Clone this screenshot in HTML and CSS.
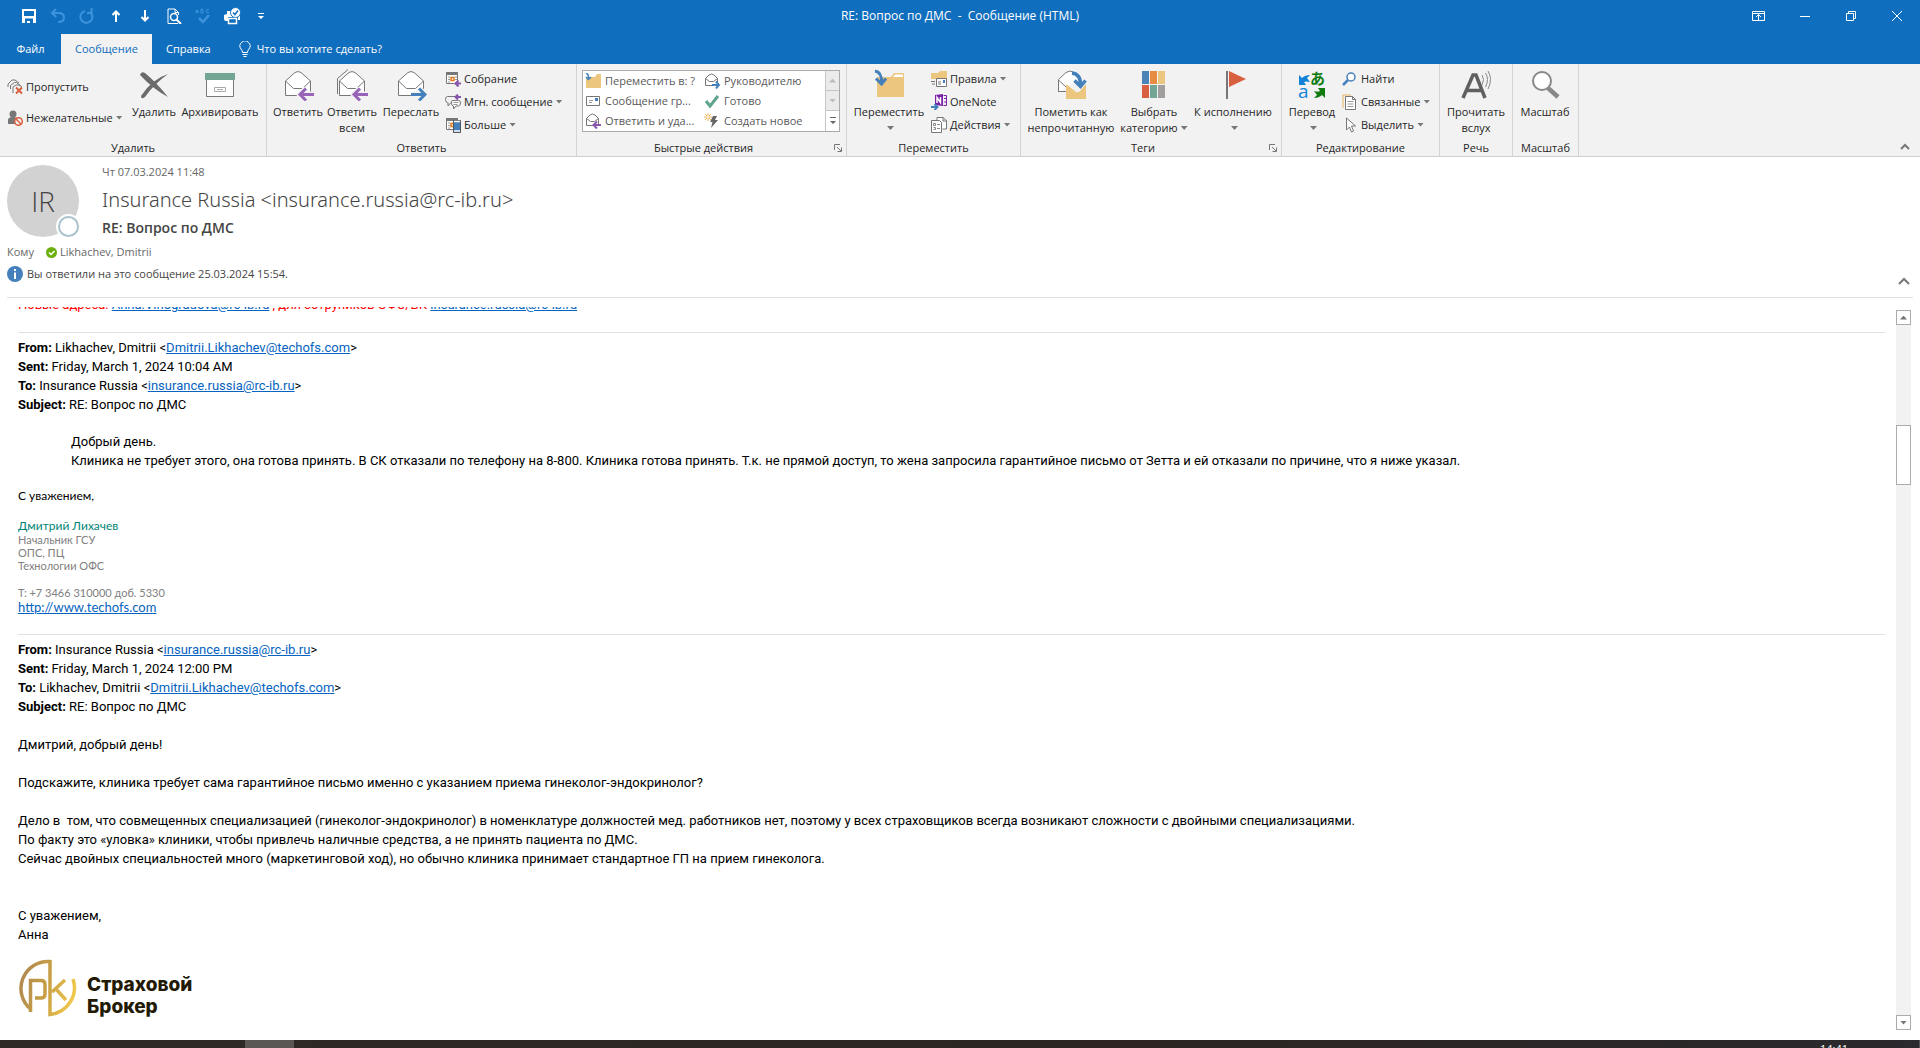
FILE: index.html
```html
<!DOCTYPE html>
<html lang="ru">
<head>
<meta charset="utf-8">
<title>RE: Вопрос по ДМС - Сообщение (HTML)</title>
<link rel="stylesheet" href="styles.css">
</head>
<body>
<svg class="defs" width="0" height="0" aria-hidden="true">
  <symbol id="mail-open" viewBox="0 0 32 32"><path d="M3.5 12L12 4.300Q16 1 20 4.300L28.500 12V26.500H3.500Z" fill="#fff" stroke="#777"/><path d="M3.500 12L11.500 19.500H20.500L28.500 12" fill="none" stroke="#777"/></symbol>
  <symbol id="mail-small" viewBox="0 0 16 16"><path d="M1.500 5.500L5 2Q7.500 0 10 2L13.500 5.500V12.500H1.500Z" fill="#fff" stroke="#777"/><path d="M1.500 5.500L5.500 8.500H9.500L13.500 5.500" fill="none" stroke="#777"/></symbol>
  <symbol id="arrow-left" viewBox="0 0 32 32"><path d="M31.500 25.500H18M24 19.500L18 25.500L24 31.500" fill="none" stroke="#f2f2f2" stroke-width="6"/><path d="M32 25.500H18M24 19.500L18 25.500L24 31.500" fill="none" stroke="#9764b8" stroke-width="3"/></symbol>
  <symbol id="arrow-right" viewBox="0 0 32 32"><path d="M16.500 25.500H30M24 19.500L30 25.500L24 31.500" fill="none" stroke="#f2f2f2" stroke-width="6"/><path d="M16 25.500H30M24 19.500L30 25.500L24 31.500" fill="none" stroke="#4480bb" stroke-width="3"/></symbol>
  <symbol id="calendar" viewBox="0 0 16 16"><path d="M1.500 3V12.500H12.500V3" fill="#fff" stroke="#777"/><path d="M1 1h12v3H1z" fill="#777"/><path d="M3 6h2M3 8.500h2M3 11h2M10 6h2M10 8.500h2" stroke="#999"/><path d="M6 6.500h3v3H6z" fill="#fff" stroke="#e07820" stroke-width="1.500"/></symbol>
  <symbol id="folder" viewBox="0 0 32 32"><path d="M4 8H18L21 4H31V28H4Z" fill="#ecc57e"/><path d="M20 8L22 5.500H30V8" fill="#fff"/></symbol>
</svg>

<div class="window">
  <header class="titlebar">
    <div class="quick">
      <button aria-label="Сохранить"><svg width="16" height="16" viewBox="0 0 16 16"><path d="M1 1h14v14H1z" fill="#fff"/><path d="M3 3h10v5H3zM4 10.500h8V15H9v-2H6v2H4z" fill="#106ebe"/></svg></button>
      <button aria-label="Отменить"><svg width="16" height="16" viewBox="0 0 16 16" fill="none" stroke="#3d93dc" stroke-width="2"><path d="M6 1L2 5l4 4M2 5h7q5 0 5 4.500Q14 14 8 14"/></svg></button>
      <button aria-label="Повторить"><svg width="16" height="16" viewBox="0 0 16 16" fill="none" stroke="#3d93dc" stroke-width="2"><path d="M6 3A6 6 0 1 0 12 5M8 5h4.500V0"/></svg></button>
      <button aria-label="Предыдущий"><svg width="16" height="16" viewBox="0 0 16 16" fill="none" stroke="#fff" stroke-width="2"><path d="M8 14V3M4.500 7L8 3.500L11.500 7"/></svg></button>
      <button aria-label="Следующий"><svg width="16" height="16" viewBox="0 0 16 16" fill="none" stroke="#fff" stroke-width="2"><path d="M8 2v11M4.500 9L8 12.500L11.500 9"/></svg></button>
      <button aria-label="Просмотр"><svg width="16" height="16" viewBox="0 0 16 16" fill="none" stroke="#fff"><path d="M12.500 7V4.500L9 1H2v14.500h10M9 1v3.500h3.500"/><circle cx="8" cy="9" r="3.500" stroke-width="1.500"/><path d="M10.500 11.500L15 16" stroke-width="2"/></svg></button>
      <button aria-label="Правописание"><svg width="16" height="16" viewBox="0 0 16 16" fill="none" stroke="#3d93dc"><path d="M1 5V3q1-2 2 0v2M1 4h2M6 1v4h2q1-1-.5-2q1.500-1 0-2zM14 1.500h-2q-1 1.500 0 3h2"/><path d="M4 10l4 4l6-7" stroke-width="2.500"/></svg></button>
      <button aria-label="Быстрая печать"><svg width="18" height="18" viewBox="0 0 18 18"><path d="M4 4h4v3h9v6h-2v-3H5v4H3q-2 0-2-2V8l3-1z" fill="#fff"/><circle cx="12.500" cy="5.500" r="5" fill="#fff" stroke="#106ebe"/><path d="M10 5.500l2 2l3-4" fill="none" stroke="#106ebe" stroke-width="1.500"/><path d="M5.500 11.500h8v5h-8z" fill="#106ebe" stroke="#fff" stroke-width="1.500"/></svg></button>
      <button aria-label="Настройка панели"><svg width="8" height="8" viewBox="0 0 8 8" fill="#fff"><path d="M1 1h6v1H1zM1 4h6L4 7z"/></svg></button>
    </div>
    <h1 class="caption">RE: Вопрос по ДМС&nbsp; -&nbsp; Сообщение (HTML)</h1>
    <div class="controls">
      <button aria-label="Параметры ленты"><svg width="14" height="12" viewBox="0 0 14 12" fill="none" stroke="#fff"><path d="M.5 1.500h12v9H.5zM.5 3.500h12M6.500 10V5M4 7l2.500-2.500L9 7"/></svg></button>
      <button aria-label="Свернуть"><svg width="12" height="12" viewBox="0 0 12 12" stroke="#fff"><path d="M1 6.500h10"/></svg></button>
      <button aria-label="Восстановить"><svg width="12" height="12" viewBox="0 0 12 12" fill="none" stroke="#fff"><path d="M1.500 3.500h7v7h-7zM3.500 3V1.500h7v7H9"/></svg></button>
      <button aria-label="Закрыть"><svg width="12" height="12" viewBox="0 0 12 12" stroke="#fff"><path d="M1 1l10 10M11 1L1 11"/></svg></button>
    </div>
  </header>

  <nav class="tabs">
    <button class="tab">Файл</button>
    <button class="tab tab-active">Сообщение</button>
    <button class="tab">Справка</button>
    <button class="tell"><svg width="12" height="17" viewBox="0 0 12 17" fill="none" stroke="#fff"><path d="M3.500 11.500Q3.500 9.500 2 8A5 5 0 1 1 10 8Q8.500 9.500 8.500 11.500ZM3.500 13.500h5M4.500 15.500h3"/></svg>Что вы хотите сделать?</button>
  </nav>

  <section class="ribbon">
    <div class="group g-delete">
      <div class="tools">
        <div class="stack stack-wide">
          <button class="small"><svg viewBox="0 0 16 16"><path d="M1 8V5l4-4h3l4 3M3.500 10V6.500l4-3h2l4 3M6 14V8l3-2h3l3 2" fill="none" stroke="#777"/><path d="M9 8.500l6 6M15 8.500l-6 6" stroke="#d8603f" stroke-width="2"/></svg>Пропустить</button>
          <button class="small"><svg viewBox="0 0 16 16"><circle cx="6" cy="4" r="3.500" fill="#777"/><path d="M1 14V10q0-3 5-3t5 3v4z" fill="#777"/><circle cx="11.500" cy="11.500" r="3.800" fill="#f2f2f2" stroke="#d8603f" stroke-width="1.500"/><path d="M9 9l5 5" stroke="#d8603f" stroke-width="1.500"/></svg>Нежелательные<i class="arrow"></i></button>
        </div>
        <button class="large w-delete"><svg viewBox="0 0 32 32"><path d="M2 6Q3 2 7 4Q18 13 30 28Q15 20 2 6Z" fill="#6b6b6b"/><path d="M30 5Q16 15 7 28Q3 31 3 27Q14 10 30 5Z" fill="#6b6b6b"/></svg><span>Удалить</span></button>
        <button class="large w-archive"><svg viewBox="0 0 32 32"><path d="M2.500 10.500h27v17h-27z" fill="#fff" stroke="#777"/><path d="M1 4h30v7H1z" fill="#73a594"/><path d="M10.500 18.500h11v4h-11z" fill="none" stroke="#aaa"/><path d="M13 20.500h6" stroke="#aaa"/></svg><span>Архивировать</span></button>
      </div>
      <h2>Удалить</h2>
    </div>

    <div class="group g-reply">
      <div class="tools">
        <button class="large w-reply"><svg viewBox="0 0 32 32"><use href="#mail-open"/><use href="#arrow-left"/></svg><span>Ответить</span></button>
        <button class="large w-reply"><svg viewBox="0 0 32 32"><path d="M1.500 25V9.500L12 .5" fill="none" stroke="#777"/><use href="#mail-open"/><use href="#arrow-left"/></svg><span>Ответить<br>всем</span></button>
        <button class="large w-forward"><svg viewBox="0 0 32 32"><use href="#mail-open"/><use href="#arrow-right"/></svg><span>Переслать</span></button>
        <div class="stack">
          <button class="small"><svg viewBox="0 0 16 16"><use href="#calendar"/><path d="M16 12.500h-5M13.500 9.500l-3 3l3 3" fill="none" stroke="#8756ac" stroke-width="2"/></svg>Собрание</button>
          <button class="small"><svg viewBox="0 0 16 16"><path d="M10 2.500H2.500q-2 0-2 3t2 3H3V12l3-3.500" fill="none" stroke="#777"/><path d="M7.500 6.500h6q2 0 2 2.500t-2 3H11L8.500 15v-3q-2 0-2-3t1-2.500z" fill="#fff" stroke="#777"/><path d="M8.500 8.500h5M8.500 10.500h4" stroke="#999"/><path d="M16 3h-5M13 .5L10.500 3L13 5.500" fill="none" stroke="#8756ac" stroke-width="2"/></svg>Мгн. сообщение<i class="arrow"></i></button>
          <button class="small"><svg viewBox="0 0 16 16"><use href="#calendar"/><path d="M8.500 3.500h7v12h-7z" fill="#4480bb" stroke="#555"/><path d="M9 4.500h6M9 14h6" stroke="#fff" stroke-width="1.500"/></svg>Больше<i class="arrow"></i></button>
        </div>
      </div>
      <h2>Ответить</h2>
    </div>

    <div class="group g-quick">
      <div class="tools">
        <div class="gallery">
          <div class="gallery-items">
            <button><svg viewBox="0 0 16 16"><path d="M1 4h9l2-3h4v14H1z" fill="#ecc57e"/><path d="M1 0q3 1 2.500 6M1 4l2.500 2.500L6 4" fill="none" stroke="#4480bb" stroke-width="1.500"/></svg>Переместить в: ?</button>
            <button><svg viewBox="0 0 16 16"><use href="#mail-small"/><path d="M8 12h7M12 8.500l3 3.500l-3 3.500" fill="none" stroke="#4480bb" stroke-width="2"/></svg>Руководителю</button>
            <button><svg viewBox="0 0 16 16"><path d="M1.500 3.500h13v9h-13z" fill="#fff" stroke="#777"/><path d="M10 5h3v3h-3z" fill="#4480bb"/><path d="M4 7.500h4M4 9.500h3" stroke="#999"/></svg>Сообщение гр...</button>
            <button><svg viewBox="0 0 16 16"><path d="M2 8l4 5L14 3" fill="none" stroke="#5fa58c" stroke-width="3"/></svg>Готово</button>
            <button><svg viewBox="0 0 16 16"><use href="#mail-small"/><path d="M16 12h-7M12 8.500L8.500 12l3.500 3.500" fill="none" stroke="#8756ac" stroke-width="2"/></svg>Ответить и уда...</button>
            <button><svg viewBox="0 0 16 16"><path d="M9 3h4L11 7h3L7 15l1.500-6H6z" fill="#666"/><path d="M4 0v8M0 4h8M1 1l6 6M7 1L1 7" stroke="#e8b45c"/><circle cx="4" cy="4" r="1" fill="#fff"/></svg>Создать новое</button>
          </div>
          <div class="gallery-scroll">
            <button aria-label="Вверх" disabled><i class="arrow up"></i></button>
            <button aria-label="Вниз" disabled><i class="arrow"></i></button>
            <button aria-label="Ещё"><svg width="8" height="8" viewBox="0 0 8 8" fill="#666"><path d="M1 0h6v1H1zM1 4h6L4 7z"/></svg></button>
          </div>
        </div>
      </div>
      <div class="group-foot"><h2>Быстрые действия</h2><button class="launcher" aria-label="Параметры"><svg width="8" height="8" viewBox="0 0 8 8" fill="none" stroke="#777"><path d="M.5 6V.5H6M3 3l4 4M7.500 3.500v4h-4"/></svg></button></div>
    </div>

    <div class="group g-move">
      <div class="tools">
        <button class="large w-move"><svg viewBox="0 0 32 32"><use href="#folder"/><path d="M2 2Q9 3 8.500 14M3 9.500l5.500 5.500L13 9.500" fill="none" stroke="#4480bb" stroke-width="3"/></svg><span>Переместить<br><i class="arrow"></i></span></button>
        <div class="stack">
          <button class="small"><svg viewBox="0 0 16 16"><path d="M0 2h7l2-2h7v8H0z" fill="#ecc57e"/><path d="M5.500 7.500h10v8h-10z" fill="#fff" stroke="#777"/><path d="M12 9h2v3h-2z" fill="#4480bb"/><path d="M0 10.500h4M1 13h3M7 11h3M7 13h3" stroke="#777"/></svg>Правила<i class="arrow"></i></button>
          <button class="small"><svg viewBox="0 0 16 16"><path d="M4 1l8-1v12l-8-1z" fill="#7a1fa8"/><path d="M12.500 1.500h3v10h-3M13 4.500h2M13 8h2" fill="none" stroke="#7a1fa8"/><path d="M6 9V3.500l3.500 5V3" fill="none" stroke="#fff" stroke-width="1.500"/><path d="M0 13h6M3.500 10l3 3l-3 3" fill="none" stroke="#4480bb" stroke-width="2"/></svg>OneNote</button>
          <button class="small"><svg viewBox="0 0 16 16"><path d="M6 3V.5h6l3.500 3V12h-4M12 .5V4h3.500" fill="#fff" stroke="#777"/><path d="M.5 3.500h8l2 2v10H.5z" fill="#fff" stroke="#777"/><path d="M2.500 6.500h2v2h-2zM2.500 10.500h2v2h-2M6 7.500h3M6 11.500h3" fill="none" stroke="#888"/></svg>Действия<i class="arrow"></i></button>
        </div>
      </div>
      <h2>Переместить</h2>
    </div>

    <div class="group g-tags">
      <div class="tools">
        <button class="large w-unread"><svg viewBox="0 0 32 32"><path d="M3.500 22.500H12M3.500 23V10.500L11 3.500q4-3 8 0l6 6" fill="#fff" stroke="#777"/><path d="M3.500 11L11 18" stroke="#777"/><path d="M11 15l10 8q2 1 4-1l6-7v15H11z" fill="#ecc57e"/><path d="M17 4Q26 5 25.500 17M19.500 11.500l6 6l5-6" fill="none" stroke="#4480bb" stroke-width="3.500"/></svg><span>Пометить как<br>непрочитанную</span></button>
        <button class="large w-category"><svg viewBox="0 0 32 32"><path d="M4 2h7v13H4z" fill="#4b82b8"/><path d="M12 2h7v13h-7z" fill="#e68b41"/><path d="M20 2h7v13h-7z" fill="#ecc57e"/><path d="M4 16h7v13H4z" fill="#d86041"/><path d="M12 16h7v13h-7z" fill="#73a594"/><path d="M20 16h7v13h-7z" fill="#a19f9d"/></svg><span>Выбрать<br>категорию<i class="arrow"></i></span></button>
        <button class="large w-follow"><svg viewBox="0 0 32 32"><path d="M9 2h2v28H9z" fill="#777"/><path d="M12 2l17 8l-17 8z" fill="#d86041"/></svg><span>К исполнению<br><i class="arrow"></i></span></button>
      </div>
      <div class="group-foot"><h2>Теги</h2><button class="launcher" aria-label="Параметры"><svg width="8" height="8" viewBox="0 0 8 8" fill="none" stroke="#777"><path d="M.5 6V.5H6M3 3l4 4M7.500 3.500v4h-4"/></svg></button></div>
    </div>

    <div class="group g-edit">
      <div class="tools">
        <button class="large w-translate"><svg class="translate" viewBox="0 0 32 32"><path d="M3 6l3 3q3-3 8-3l-3 3l3 4q-4-1-6 0l2 3H3z" fill="#1183d8"/><text x="2" y="29" class="glyph-latin">a</text><text x="14" y="15" class="glyph-kana">あ</text><path d="M29 29l-3-3q-3 3-8 3l3-3l-3-4q4 1 6 0l-2-3h7z" fill="#107c10"/></svg><span>Перевод<br><i class="arrow"></i></span></button>
        <div class="stack">
          <button class="small"><svg viewBox="0 0 16 16"><circle cx="9" cy="6" r="4" fill="#fff" stroke="#4480bb" stroke-width="1.500"/><path d="M6 9l-5 5" stroke="#4480bb" stroke-width="2.500"/></svg>Найти</button>
          <button class="small"><svg viewBox="0 0 16 16"><path d="M1 14V1h8" fill="none" stroke="#ecb45e"/><path d="M3.500 2.500h7l3 3v10h-10zM10.500 2.500v3h3" fill="#fff" stroke="#777"/><path d="M5.500 7.500h6M5.500 10h6M5.500 12.500h6" stroke="#999"/></svg>Связанные<i class="arrow"></i></button>
          <button class="small"><svg viewBox="0 0 16 16"><path d="M4.500 1v12l3-3l2 5l2-1l-2-5h4z" fill="#fff" stroke="#777"/></svg>Выделить<i class="arrow"></i></button>
        </div>
      </div>
      <h2>Редактирование</h2>
    </div>

    <div class="group g-speech">
      <div class="tools">
        <button class="large w-fill"><svg viewBox="0 0 32 32"><path d="M3 29L13 6h3l9 23M7 21.500h14" fill="none" stroke="#606060" stroke-width="3.500"/><path d="M22 6q3 4 0 10M25.500 4q4 6 0 14M28 2q5 8 0 18" fill="none" stroke="#888"/></svg><span>Прочитать<br>вслух</span></button>
      </div>
      <h2>Речь</h2>
    </div>

    <div class="group g-zoom">
      <div class="tools">
        <button class="large w-zoom"><svg viewBox="0 0 32 32"><path d="M19 19l10 9" stroke="#888" stroke-width="4.500"/><circle cx="13" cy="12" r="9" fill="#fff" stroke="#888" stroke-width="2"/></svg><span>Масштаб</span></button>
      </div>
      <h2>Масштаб</h2>
    </div>
    <button class="collapse" aria-label="Свернуть ленту"><svg width="10" height="7" viewBox="0 0 10 7" fill="none" stroke="#777" stroke-width="2"><path d="M1 6l4-4l4 4"/></svg></button>
  </section>

  <section class="head">
    <div class="sender">
      <div class="avatar">IR<span class="presence"></span></div>
      <div class="who">
        <time class="date">Чт 07.03.2024 11:48</time>
        <div class="from">Insurance Russia &lt;insurance.russia@rc-ib.ru&gt;</div>
        <h2 class="subject">RE: Вопрос по ДМС</h2>
      </div>
    </div>
    <div class="to"><span class="to-label">Кому</span><svg width="11" height="11" viewBox="0 0 11 11"><circle cx="5.500" cy="5.500" r="5.500" fill="#6bb00b"/><path d="M3 5.500l2 2l3.500-3.500" fill="none" stroke="#fff" stroke-width="1.500"/></svg>Likhachev, Dmitrii</div>
    <div class="info"><svg width="16" height="16" viewBox="0 0 16 16"><circle cx="8" cy="8" r="8" fill="#4480bb"/><path d="M7 6.500h2V13H7zM7 3h2v2H7z" fill="#fff"/></svg><span>Вы ответили на это сообщение 25.03.2024 15:54.</span>
      <button class="collapse-head" aria-label="Свернуть"><svg width="12" height="8" viewBox="0 0 12 8" fill="none" stroke="#777" stroke-width="2"><path d="M1 7l5-5l5 5"/></svg></button></div>
  </section>

  <div class="reader">
    <main class="mail">
      <div class="mail-flow">
        <p class="notice">Новые адреса: <a href="#">Anna.Vinogradova@rc-ib.ru</a> , для сотруников ОФС/БК <a href="#">insurance.russia@rc-ib.ru</a></p>
        <hr>
        <p><b>From:</b> Likhachev, Dmitrii &lt;<a href="#">Dmitrii.Likhachev@techofs.com</a>&gt;<br>
          <b>Sent:</b> Friday, March 1, 2024 10:04 AM<br>
          <b>To:</b> Insurance Russia &lt;<a href="#">insurance.russia@rc-ib.ru</a>&gt;<br>
          <b>Subject:</b> RE: Вопрос по ДМС</p>
        <p class="quote">Добрый день.<br>Клиника не требует этого, она готова принять. В СК отказали по телефону на 8-800. Клиника готова принять. Т.к. не прямой доступ, то жена запросила гарантийное письмо от Зетта и ей отказали по причине, что я ниже указал.</p>
        <div class="signature">
          <p class="regards">С уважением,</p>
          <p class="name">Дмитрий Лихачев</p>
          <p class="post">Начальник ГСУ<br>ОПС, ПЦ<br>Технологии ОФС</p>
          <p class="phone">Т: +7 3466 310000 доб. 5330</p>
          <p class="site"><a href="#">http://www.techofs.com</a></p>
        </div>
        <hr>
        <p><b>From:</b> Insurance Russia &lt;<a href="#">insurance.russia@rc-ib.ru</a>&gt;<br>
          <b>Sent:</b> Friday, March 1, 2024 12:00 PM<br>
          <b>To:</b> Likhachev, Dmitrii &lt;<a href="#">Dmitrii.Likhachev@techofs.com</a>&gt;<br>
          <b>Subject:</b> RE: Вопрос по ДМС</p>
        <p>Дмитрий, добрый день!</p>
        <p>Подскажите, клиника требует сама гарантийное письмо именно с указанием приема гинеколог-эндокринолог?</p>
        <p>Дело в&nbsp; том, что совмещенных специализацией (гинеколог-эндокринолог) в номенклатуре должностей мед. работников нет, поэтому у всех страховщиков всегда возникают сложности с двойными специализациями.<br>По факту это «уловка» клиники, чтобы привлечь наличные средства, а не принять пациента по ДМС.<br>Сейчас двойных специальностей много (маркетинговой ход), но обычно клиника принимает стандартное ГП на прием гинеколога.</p>
        <p class="closing">С уважением,<br>Анна</p>
        <div class="brand">
          <svg width="58" height="58" viewBox="0 0 58 58" fill="none" stroke="url(#gold)" stroke-width="3.500">
            <defs><linearGradient id="gold" gradientUnits="userSpaceOnUse" x1="0" y1="20" x2="58" y2="36"><stop offset="0" stop-color="#b08850"/><stop offset=".5" stop-color="#c9a045"/><stop offset="1" stop-color="#f4cc4c"/></linearGradient></defs>
            <path d="M11.500 53V21.500H22Q26 21.500 26 25.500V35Q26 39 22 39H16"/><path d="M11.500 50A27 27 0 0 1 31 2.500V55.500A27 27 0 0 0 54 20"/><path d="M46 21L33 33M36 29L47 41"/>
          </svg>
          <div class="brand-name">Страховой<br>Брокер</div>
        </div>
      </div>
    </main>
    <div class="scrollbar">
      <button aria-label="Прокрутить вверх"><i class="arrow up"></i></button>
      <div class="track"><div class="thumb"></div></div>
      <button aria-label="Прокрутить вниз"><i class="arrow"></i></button>
    </div>
  </div>

  <footer class="taskbar"><div class="task"></div><time class="clock">14:41</time></footer>
</div>
</body>
</html>
```

FILE: styles.css
```css
* { box-sizing: border-box; }
body { margin: 0; background: #fff; color: #262626; font: 12px/16px "Open Sans", "Noto Sans", sans-serif; }
button { margin: 0; padding: 0; border: 0; background: none; color: inherit; font: inherit; white-space: nowrap; }
h1, h2, p { margin: 0; font: inherit; }
.defs { position: absolute; }
.window { display: flex; flex-direction: column; height: 100vh; overflow: hidden; }

.arrow { display: inline-block; width: 7px; height: 4px; background: #777; clip-path: polygon(0 0, 100% 0, 50% 100%); }
.arrow.up { clip-path: polygon(50% 0, 100% 100%, 0 100%); }

/* title bar */
.titlebar { display: grid; grid-template-columns: 1fr auto 1fr; align-items: center; height: 34px; padding-bottom: 2px; background: #106ebe; color: #fff; font-size: 12px; }
.quick { display: flex; padding-left: 14px; }
.quick button { display: flex; justify-content: center; align-items: center; width: 29px; height: 32px; }
.controls { display: flex; justify-content: flex-end; }
.controls button { display: flex; justify-content: center; align-items: center; width: 46px; height: 30px; }

.tabs { display: flex; height: 30px; background: #106ebe; color: #fff; }
.tab { padding: 0 14px; font-size: 11px; }
.tab:first-child { width: 61px; }
.tab-active { width: 91px; padding: 0; background: #f2f2f2; color: #106ebe; }
.tell { display: flex; align-items: center; gap: 6px; margin-left: 14px; font-size: 11px; }

/* ribbon */
.ribbon { display: flex; height: 93px; flex: none; background: #f2f2f2; border-bottom: 1px solid #d0d0d0; font-size: 11px; }
.group { display: flex; flex-direction: column; padding-top: 3px; border-right: 1px solid #d4d4d4; flex: none; }
.group h2 { height: 16px; text-align: center; }
.tools { display: flex; height: 73px; padding-left: 4px; }
.g-delete { width: 267px; }
.g-reply { width: 310px; }
.g-quick { width: 270px; }
.g-move { width: 174px; }
.g-tags { width: 261px; }
.g-edit { width: 158px; }
.g-speech { width: 73px; }
.g-zoom { width: 66px; }
.group-foot { display: flex; align-items: center; padding-right: 4px; }
.group-foot h2 { flex: 1; padding-right: 4px; }
.launcher { display: flex; }

.large { display: flex; flex-direction: column; align-items: center; gap: 3px; padding-top: 2px; }
.large svg { width: 32px; height: 32px; flex: none; }
.large .arrow { vertical-align: 2px; }
.large span .arrow { margin-left: 3px; }
.w-delete { width: 54px; }
.w-archive { width: 78px; }
.w-reply { width: 54px; }
.w-forward { width: 64px; }
.w-move { width: 76px; }
.w-unread { width: 92px; }
.w-category { width: 74px; }
.w-follow { width: 84px; }
.w-translate { width: 52px; }
.w-fill { width: 64px; }
.w-zoom { width: 56px; }

.stack { display: flex; flex-direction: column; padding-left: 4px; }
.stack-wide { width: 123px; padding: 4px 0 0 3px; }
.small { display: flex; align-items: center; gap: 3px; height: 23px; }
.stack-wide .small { height: 31px; }
.small svg { width: 16px; height: 16px; }
.g-reply .stack { padding-left: 2px; }

.gallery { display: flex; width: 258px; height: 62px; margin-left: 1px; margin-top: 3px; border: 1px solid #ababab; background: #fff; color: #595959; }
.gallery-items { display: grid; grid-template-columns: 119px 1fr; grid-auto-rows: 20px; flex: 1; padding-left: 2px; }
.gallery-items button { display: flex; align-items: center; gap: 4px; }
.gallery-items svg { width: 16px; height: 16px; }
.gallery-scroll { display: grid; grid-auto-rows: 20px; width: 14px; border-left: 1px solid #c6c6c6; }
.gallery-scroll button { display: flex; justify-content: center; align-items: center; }
.gallery-scroll button:disabled { background: #ebebeb; border-bottom: 1px solid #c6c6c6; }
.gallery-scroll .arrow { background: #bbb; }

.translate { overflow: visible; }
.glyph-latin { font: 19px "Open Sans", sans-serif; fill: #1183d8; }
.glyph-kana { font: bold 15px "Noto Sans CJK JP", sans-serif; fill: #107c10; }
.collapse { margin: auto 10px 2px auto; }

/* message header */
.head { flex: none; margin: 0 7px; padding-top: 7px; border-bottom: 1px solid #e1e1e1; height: 141px; color: #666; font-size: 11px; }
.sender { display: flex; gap: 23px; height: 79px; }
.avatar { position: relative; width: 72px; height: 72px; margin-top: 1px; border-radius: 50%; background: #d2d2d2; color: #444; font: 300 28px/72px "Open Sans", sans-serif; text-align: center; }
.presence { position: absolute; right: 0; bottom: 0; width: 21px; height: 21px; border: 2px solid #a9c2cd; border-radius: 50%; background: #fff; box-shadow: 0 0 0 2px #fff; }
.date { display: block; line-height: 15px; }
.from { font: 300 20px/28px "Noto Sans", sans-serif; padding-top: 7px; height: 39px; color: #444; }
.subject { color: #444; font-size: 14px; font-weight: 600; line-height: 20px; }
.to { display: flex; align-items: center; gap: 3px; height: 18px; }
.to-label { width: 36px; }
.info { display: flex; align-items: center; gap: 4px; height: 25px; color: #444; }
.collapse-head { margin: 14px 3px 0 auto; }

/* reading pane */
.reader { display: flex; flex: 1; min-height: 0; padding: 9px 9px 10px 18px; }
.mail { flex: 1; min-width: 0; overflow: hidden; color: #000; font: 13px/19px Roboto, sans-serif; }
.mail-flow { margin-top: -12px; }
.mail p { margin-bottom: 19px; }
.mail a { color: #0563c1; }
.mail hr { height: 1px; margin: 0 11px 5px 0; border: 0; background: #e1e1e1; }
.mail .notice { color: #f00; margin-bottom: 18px; }
.mail .quote { margin: -1px 0 18px 53px; }
.mail .signature p { margin: 0; }
.signature { padding-bottom: 19px; color: #808080; font: 11px/13px Lato, sans-serif; }
.signature .regards { color: #000; font-size: 12px; line-height: 16px; }
.signature .name { padding-top: 14px; color: #008575; font-size: 12px; line-height: 15px; }
.signature .phone { padding-top: 14px; }
.signature .site { font-size: 13px; line-height: 16px; }
.mail .closing { padding-top: 19px; margin-bottom: 14px; }
.brand { display: flex; gap: 10px; padding-left: 1px; align-items: center; }
.brand-name { padding-top: 16px; color: #231a05; font: 800 19px/22px Inter, sans-serif; }

.scrollbar { display: flex; flex-direction: column; width: 15px; margin-top: 3px; background: #f2f2f2; }
.scrollbar button { display: flex; justify-content: center; align-items: center; height: 15px; border: 1px solid #ababab; background: #fff; }
.track { flex: 1; padding-top: 100px; }
.thumb { height: 60px; border: 1px solid #ababab; background: #fff; }

.taskbar { display: flex; justify-content: space-between; flex: none; height: 8px; overflow: hidden; background: linear-gradient(90deg, #302a27, #2c2522 60%, #2b292d); border-right: 1px solid #555; }
.task { width: 49px; margin-left: 245px; background: #5b5755; border-right: 4px double #5b5755; }
.clock { margin-right: 71px; color: #fff; font-size: 11px; line-height: 18px; }
```
